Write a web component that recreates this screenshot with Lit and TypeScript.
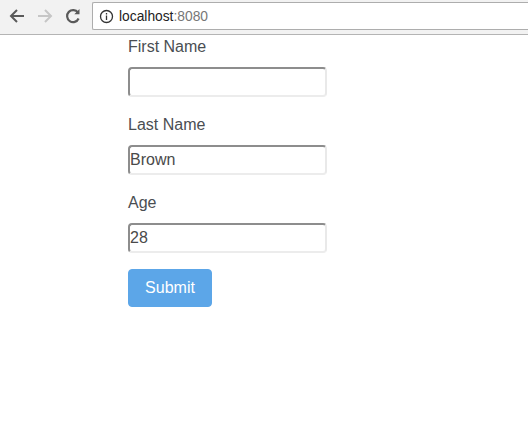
import { LitElement, html, css } from "lit";
import { customElement } from "lit/decorators.js";

@customElement("app-root")
export class AppRoot extends LitElement {
  static styles = css`
    :host { display: block; height: 425px; background: #fff; font-family: "Liberation Sans", Arial, sans-serif; overflow: hidden; }
    .chrome { box-sizing: border-box; height: 35px; background: #f2f2f2; border-bottom: 1px solid #b4b4b4; display: flex; align-items: flex-start; padding: 2px 0 0 8px; }
    .nav { display: flex; align-items: center; height: 28px; gap: 10px; }
    .nav svg { display: block; width: 18px; height: 18px; }
    .omni { box-sizing: border-box; margin-left: 10px; flex: 1; height: 28px; background: #fff; border: 1px solid #adadad; border-right: none; border-radius: 2px 0 0 2px; display: flex; align-items: center; padding-left: 6px; gap: 5px; font-size: 13.8px; color: #222; }
    .omni svg { width: 15px; height: 15px; flex: none; }
    .port { color: #777; }
    form { display: flex; flex-direction: column; align-items: flex-start; padding-left: 128px; }
    label { display: block; font-size: 16px; line-height: 24px; color: #4a4e52; margin-bottom: 8px; }
    .field { display: flex; flex-direction: column; align-items: flex-start; margin-bottom: 16px; }
    input { box-sizing: border-box; display: block; width: 199px; height: 30px; margin: 0; padding: 0 0 1px; font: 16px "Liberation Sans", Arial, sans-serif; color: #4a4a4a; background: #fff; border-radius: 4px; border-style: solid; border-width: 2px; border-color: #8d8d8d #e9e9e9 #ececec #8d8d8d; outline: none; }
    button { box-sizing: border-box; width: 84px; height: 38px; margin: 0; border: 1px solid #5ca6e8; border-radius: 4px; background: #5ca6e8; color: #fff; font: 16px "Liberation Sans", Arial, sans-serif; padding: 0; }
  `;

  render() {
    return html`
      <div class="chrome">
        <div class="nav">
          <svg viewBox="0 0 18 18" fill="none" stroke="#5a5a5a" stroke-width="2"><path d="M16 9H3M9 3L3 9l6 6"/></svg>
          <svg viewBox="0 0 18 18" fill="none" stroke="#c6c6c6" stroke-width="2"><path d="M2 9h13M9 3l6 6-6 6"/></svg>
          <svg viewBox="0 0 18 18" fill="none" stroke="#5a5a5a" stroke-width="2.2"><path d="M14.6 11.5A6 6 0 1 1 14 5.6"/><path d="M15.5 2v5.2h-5.2z" fill="#5a5a5a" stroke="none"/></svg>
        </div>
        <div class="omni">
          <svg viewBox="0 0 15 15" fill="none" stroke="#333" stroke-width="1.3"><circle cx="7.5" cy="7.5" r="6"/><path d="M7.5 6.6v4.4M7.5 4v1.6"/></svg>
          <span>localhost<span class="port">:8080</span></span>
        </div>
      </div>
      <form @submit=${(e: Event) => e.preventDefault()}>
        <div class="field"><label>First Name</label><input type="text" /></div>
        <div class="field"><label>Last Name</label><input type="text" value="Brown" /></div>
        <div class="field"><label>Age</label><input type="text" value="28" /></div>
        <button type="submit">Submit</button>
      </form>
    `;
  }
}
